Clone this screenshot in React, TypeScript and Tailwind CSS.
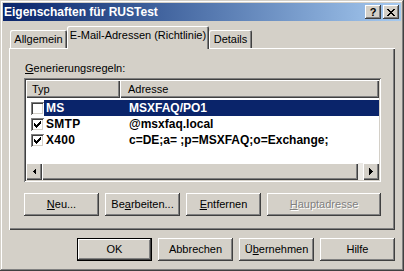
import React from "react";

const CheckMark = () => (
  <svg width="7" height="7" viewBox="0 0 7 7" shapeRendering="crispEdges">
    <rect x="6" y="0" width="1" height="1" fill="#000" />
    <rect x="5" y="1" width="2" height="1" fill="#000" />
    <rect x="0" y="2" width="1" height="1" fill="#000" />
    <rect x="4" y="2" width="3" height="1" fill="#000" />
    <rect x="0" y="3" width="2" height="1" fill="#000" />
    <rect x="3" y="3" width="3" height="1" fill="#000" />
    <rect x="0" y="4" width="5" height="1" fill="#000" />
    <rect x="1" y="5" width="3" height="1" fill="#000" />
    <rect x="2" y="6" width="1" height="1" fill="#000" />
  </svg>
);

const CloseGlyph = () => (
  <svg width="8" height="7" viewBox="0 0 8 7" shapeRendering="crispEdges">
    <rect x="0" y="0" width="2" height="1" fill="#000" />
    <rect x="6" y="0" width="2" height="1" fill="#000" />
    <rect x="1" y="1" width="2" height="1" fill="#000" />
    <rect x="5" y="1" width="2" height="1" fill="#000" />
    <rect x="2" y="2" width="4" height="1" fill="#000" />
    <rect x="3" y="3" width="2" height="1" fill="#000" />
    <rect x="2" y="4" width="4" height="1" fill="#000" />
    <rect x="1" y="5" width="2" height="1" fill="#000" />
    <rect x="5" y="5" width="2" height="1" fill="#000" />
    <rect x="0" y="6" width="2" height="1" fill="#000" />
    <rect x="6" y="6" width="2" height="1" fill="#000" />
  </svg>
);

const Checkbox = ({ checked }: { checked: boolean }) => (
  <div className="w-[13px] h-[13px] bg-white shrink-0 flex items-center justify-center shadow-[inset_1px_1px_0_#808080,inset_-1px_-1px_0_#ffffff,inset_2px_2px_0_#404040,inset_-2px_-2px_0_#d4d0c8]">
    {checked && <CheckMark />}
  </div>
);

const Btn = ({
  children,
  w,
  disabled,
  isDefault,
}: {
  children: React.ReactNode;
  w: string;
  disabled?: boolean;
  isDefault?: boolean;
}) => (
  <div
    className={`${w} h-full flex items-center justify-center bg-[#d4d0c8] ${
      isDefault
        ? "border border-black shadow-[inset_-1px_-1px_0_#404040,inset_1px_1px_0_#ffffff,inset_-2px_-2px_0_#808080]"
        : "shadow-[inset_-1px_-1px_0_#404040,inset_1px_1px_0_#ffffff,inset_-2px_-2px_0_#808080]"
    } ${disabled ? "text-[#808080] [text-shadow:1px_1px_0_#ffffff]" : "text-black"}`}
  >
    <span className="leading-[13px]">{children}</span>
  </div>
);

const U = ({ children }: { children: React.ReactNode }) => (
  <span className="underline underline-offset-1">{children}</span>
);

const rows = [
  { checked: false, typ: "MS", addr: "MSXFAQ/PO1", selected: true },
  { checked: true, typ: "SMTP", addr: "@msxfaq.local", selected: false },
  { checked: true, typ: "X400", addr: "c=DE;a= ;p=MSXFAQ;o=Exchange;", selected: false },
];

export default function App() {
  return (
    <div className="w-[404px] h-[271px] bg-[#d4d0c8] p-[3px] flex flex-col overflow-hidden shadow-[inset_-1px_-1px_0_#404040,inset_1px_1px_0_#d4d0c8,inset_-2px_-2px_0_#808080,inset_2px_2px_0_#ffffff] font-['Liberation_Sans',Arial,sans-serif] text-[11px] text-black">
      {/* Title bar */}
      <div className="h-[18px] shrink-0 flex items-center bg-gradient-to-r from-[#0a246a] to-[#a6caf0] pl-[1px] pr-[2px]">
        <span className="flex-1 text-white font-bold text-[12px] leading-[14px]">
          Eigenschaften für RUSTest
        </span>
        <div className="flex gap-[2px]">
          <div className="w-[16px] h-[14px] flex items-center justify-center bg-[#d4d0c8] shadow-[inset_-1px_-1px_0_#404040,inset_1px_1px_0_#ffffff,inset_-2px_-2px_0_#808080]">
            <span className="font-bold text-[11px] leading-[11px]">?</span>
          </div>
          <div className="w-[16px] h-[14px] flex items-center justify-center bg-[#d4d0c8] shadow-[inset_-1px_-1px_0_#404040,inset_1px_1px_0_#ffffff,inset_-2px_-2px_0_#808080]">
            <CloseGlyph />
          </div>
        </div>
      </div>

      {/* Tabs */}
      <div className="h-[27px] shrink-0 flex items-end pl-[7px] relative z-10">
        <div className="w-[57px] h-[18px] flex items-center justify-center rounded-t-[2px] bg-[#d4d0c8] shadow-[inset_1px_1px_0_#ffffff,inset_-1px_0_0_#404040,inset_-2px_0_0_#808080]">
          <span className="leading-[13px] pt-[1px]">Allgemein</span>
        </div>
        <div className="w-[142px] h-[23px] mb-[-1px] flex items-start pt-[3px] justify-center rounded-t-[2px] bg-[#d4d0c8] shadow-[inset_1px_1px_0_#ffffff,inset_-1px_0_0_#404040,inset_-2px_0_0_#808080]">
          <span className="leading-[13px]">E-Mail-Adressen (Richtlinie)</span>
        </div>
        <div className="w-[43px] h-[18px] flex items-center justify-center rounded-t-[2px] bg-[#d4d0c8] shadow-[inset_1px_1px_0_#ffffff,inset_-1px_0_0_#404040,inset_-2px_0_0_#808080]">
          <span className="leading-[13px] pt-[1px]">Details</span>
        </div>
      </div>

      {/* Panel */}
      <div className="h-[182px] shrink-0 mx-[6px] pl-[15px] pr-[14px] flex flex-col shadow-[inset_1px_1px_0_#ffffff,inset_-1px_-1px_0_#404040,inset_-2px_-2px_0_#808080]">
        <div className="mt-[14px] h-[13px] leading-[13px] pl-[1px]">
          <U>G</U>enerierungsregeln:
        </div>
        <div className="mt-[3px] h-[104px] bg-white p-[2px] flex flex-col shadow-[inset_1px_1px_0_#808080,inset_-1px_-1px_0_#ffffff,inset_2px_2px_0_#404040,inset_-2px_-2px_0_#d4d0c8]">
          {/* header */}
          <div className="h-[18px] flex shrink-0">
            <div className="w-[94px] h-full flex items-center pl-[6px] bg-[#d4d0c8] shadow-[inset_1px_1px_0_#ffffff,inset_-1px_-1px_0_#404040,inset_-2px_-2px_0_#808080]">
              <span className="leading-[13px]">Typ</span>
            </div>
            <div className="flex-1 h-full flex items-center pl-[8px] bg-[#d4d0c8] shadow-[inset_1px_1px_0_#ffffff,inset_-1px_-1px_0_#404040,inset_-2px_-2px_0_#808080]">
              <span className="leading-[13px]">Adresse</span>
            </div>
          </div>
          {/* rows */}
          <div className="flex flex-col mt-[2px]">
            {rows.map((r) => (
              <div key={r.typ} className="h-[16px] flex items-center pl-[5px]">
                <Checkbox checked={r.checked} />
                <div
                  className={`flex-1 h-full flex items-center font-bold text-[12px] ${
                    r.selected ? "bg-[#0a246a] text-white" : "text-black"
                  }`}
                >
                  <span className="w-[76px] pl-[2px] leading-[14px] tracking-[0.3px]">{r.typ}</span>
                  <span className="pl-[9px] leading-[14px] whitespace-nowrap">{r.addr}</span>
                </div>
              </div>
            ))}
          </div>
          <div className="flex-1" />
          {/* scrollbar */}
          <div className="h-[17px] shrink-0 flex bg-[#ebe9e5]">
            <div className="w-[16px] h-full flex items-center justify-center bg-[#d4d0c8] shadow-[inset_1px_1px_0_#ffffff,inset_-1px_-1px_0_#404040,inset_-2px_-2px_0_#808080]">
              <svg width="4" height="7" viewBox="0 0 4 7" shapeRendering="crispEdges">
                <polygon points="4,0 4,7 0.5,3.5" fill="#000" />
              </svg>
            </div>
            <div className="w-[316px] h-full bg-[#d4d0c8] shadow-[inset_1px_1px_0_#ffffff,inset_-1px_-1px_0_#404040,inset_-2px_-2px_0_#808080]" />
            <div className="flex-1" />
            <div className="w-[16px] h-full flex items-center justify-center bg-[#d4d0c8] shadow-[inset_1px_1px_0_#ffffff,inset_-1px_-1px_0_#404040,inset_-2px_-2px_0_#808080]">
              <svg width="4" height="7" viewBox="0 0 4 7" shapeRendering="crispEdges">
                <polygon points="0,0 0,7 3.5,3.5" fill="#000" />
              </svg>
            </div>
          </div>
        </div>
        <div className="mt-[11px] h-[23px] flex gap-[6px]">
          <Btn w="w-[75px]">
            <U>N</U>eu...
          </Btn>
          <Btn w="w-[75px]">
            Be<U>a</U>rbeiten...
          </Btn>
          <Btn w="w-[75px]">
            <U>E</U>ntfernen
          </Btn>
          <Btn w="w-[114px]" disabled>
            <U>H</U>auptadresse
          </Btn>
        </div>
      </div>

      {/* Bottom buttons */}
      <div className="mt-[8px] h-[23px] shrink-0 flex justify-end gap-[6px] pr-[6px]">
        <Btn w="w-[75px]" isDefault>
          OK
        </Btn>
        <Btn w="w-[75px]">Abbrechen</Btn>
        <Btn w="w-[75px]">
          Ü<U>b</U>ernehmen
        </Btn>
        <Btn w="w-[75px]">Hilfe</Btn>
      </div>
    </div>
  );
}
